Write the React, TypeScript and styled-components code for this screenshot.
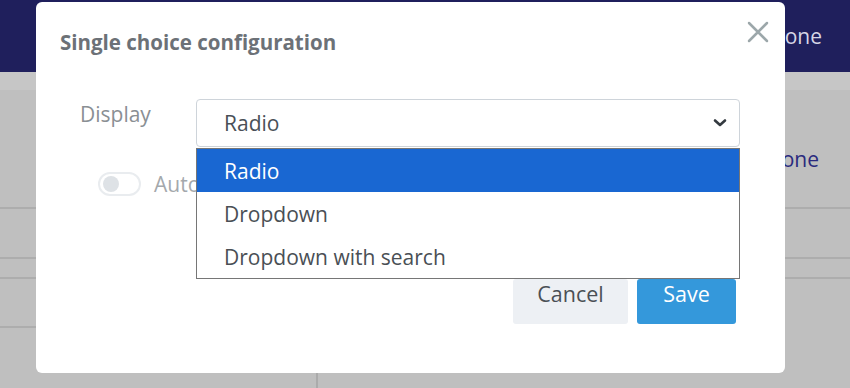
import React from 'react'
import styled, { createGlobalStyle } from 'styled-components'

const GlobalStyle = createGlobalStyle`
    html, body {
        margin: 0;
        padding: 0;
        width: 850px;
        height: 388px;
        overflow: hidden;
        background: #bfbfbf;
        font-family: "Open Sans", "Noto Sans", sans-serif;
    }
`

// page behind the dimmed backdrop
const Page = styled.div`
    width: 850px;
    height: 388px;
    display: flex;
    flex-direction: column;
    overflow: hidden;
    background: #bfbfbf;
`

const TopBar = styled.div`
    flex-shrink: 0;
    height: 72px;
    background: #1f1f5c;
    display: flex;
    align-items: center;
    justify-content: flex-end;
    padding-right: 28px;
    color: #d6d6e6;
    font-size: 21px;
`

const SubBand = styled.div`
    flex-shrink: 0;
    height: 18px;
    background: #c6c6c6;
`

const Table = styled.div`
    flex: 1;
    min-height: 0;
    display: grid;
    grid-template-columns: 318px 1fr;
`

const Column = styled.div<{ $divider?: boolean }>`
    display: flex;
    flex-direction: column;
    border-right: ${(p) => (p.$divider ? '2px solid #ababab' : 'none')};
`

const Cell = styled.div<{ $h: number; $line?: boolean }>`
    flex-shrink: 0;
    height: ${(p) => p.$h}px;
    box-sizing: border-box;
    border-bottom: ${(p) => (p.$line ? '2px solid #adadad' : 'none')};
    display: flex;
    align-items: center;
    justify-content: flex-end;
    padding: 0 31px 0 0;
    color: #2a2a7e;
    font-size: 21px;
`

const CellText = styled.span`
    margin-top: 20px;
`

// modal
const Modal = styled.div`
    position: fixed;
    left: 36px;
    top: 2px;
    width: 749px;
    height: 371px;
    background: #ffffff;
    border-radius: 6px;
    box-sizing: border-box;
    padding: 26px 49px 0 24px;
    display: flex;
    flex-direction: column;
`

const Title = styled.h2`
    margin: 0;
    font-size: 20.5px;
    line-height: 28px;
    font-weight: 700;
    color: #6c7177;
`

const CloseButton = styled.button`
    position: absolute;
    top: 16px;
    right: 13px;
    width: 28px;
    height: 28px;
    border: none;
    background: none;
    padding: 0;
    cursor: pointer;
`

const FieldRow = styled.div`
    display: flex;
    margin-top: 43px;
    padding-left: 20px;
    margin-right: -4px;
`

const Label = styled.label`
    width: 116px;
    font-size: 21px;
    line-height: 30px;
    color: #8a8f94;
`

const SelectWrap = styled.div`
    position: relative;
    flex: 1;
`

const SelectBox = styled.div`
    height: 48px;
    box-sizing: border-box;
    border: 1px solid #ced4da;
    border-radius: 4px;
    display: flex;
    align-items: center;
    justify-content: space-between;
    padding: 0 12px 0 27px;
    font-size: 21px;
    color: #495057;
`

const OptionList = styled.ul`
    position: absolute;
    left: 0;
    right: 0;
    top: 49px;
    margin: 0;
    padding: 0;
    list-style: none;
    background: #ffffff;
    border: 1px solid #767676;
    z-index: 2;
`

const Option = styled.li<{ $active?: boolean }>`
    height: 43px;
    display: flex;
    align-items: center;
    padding-left: 27px;
    font-size: 21px;
    background: ${(p) => (p.$active ? '#1967d2' : '#ffffff')};
    color: ${(p) => (p.$active ? '#ffffff' : '#4a4f55')};
`

const ToggleRow = styled.div`
    display: flex;
    align-items: center;
    gap: 13px;
    margin-top: 23px;
    padding-left: 38px;
    font-size: 21px;
    color: #a4a8ac;
    white-space: nowrap;
`

const Toggle = styled.span`
    flex-shrink: 0;
    width: 43px;
    height: 24px;
    box-sizing: border-box;
    border: 2px solid #e9ecef;
    border-radius: 12px;
    display: flex;
    align-items: center;
    padding-left: 3px;
`

const Knob = styled.span`
    width: 16px;
    height: 16px;
    border-radius: 50%;
    background: #dee2e6;
`

const Footer = styled.div`
    display: flex;
    justify-content: flex-end;
    gap: 9px;
    margin-top: 81px;
`

const Button = styled.button<{ $primary?: boolean }>`
    height: 45px;
    padding: 0 24px 19px;
    border: none;
    border-radius: 3px;
    font-family: inherit;
    font-size: 21.5px;
    background: ${(p) => (p.$primary ? '#3498db' : '#edf0f4')};
    color: ${(p) => (p.$primary ? '#ffffff' : '#4a4f55')};
    min-width: ${(p) => (p.$primary ? '99px' : '115px')};
`

export default function App() {
    return (
        <>
            <GlobalStyle />
            <Page>
                <TopBar>Done</TopBar>
                <SubBand />
                <Table>
                    <Column $divider>
                        <Cell $h={119} $line />
                        <Cell $h={50} $line />
                        <Cell $h={20} $line />
                        <Cell $h={49} $line />
                        <Cell $h={60} />
                    </Column>
                    <Column>
                        <Cell $h={119} $line>
                            <CellText>Done</CellText>
                        </Cell>
                        <Cell $h={50} $line />
                        <Cell $h={20} $line />
                        <Cell $h={100} />
                    </Column>
                </Table>
            </Page>

            <Modal>
                <Title>Single choice configuration</Title>
                <CloseButton aria-label="Close">
                    <svg width="28" height="28" viewBox="0 0 28 28">
                        <path d="M5 5 L23 23 M23 5 L5 23" stroke="#9ca7aa" strokeWidth="2.5" strokeLinecap="round" />
                    </svg>
                </CloseButton>

                <FieldRow>
                    <Label>Display</Label>
                    <SelectWrap>
                        <SelectBox>
                            <span>Radio</span>
                            <svg width="14" height="10" viewBox="0 0 14 10">
                                <path d="M2 2.5 L7 7 L12 2.5" fill="none" stroke="#343a40" strokeWidth="2.6" strokeLinecap="round" strokeLinejoin="round" />
                            </svg>
                        </SelectBox>
                        <OptionList>
                            <Option $active>Radio</Option>
                            <Option>Dropdown</Option>
                            <Option>Dropdown with search</Option>
                        </OptionList>
                    </SelectWrap>
                </FieldRow>

                <ToggleRow>
                    <Toggle>
                        <Knob />
                    </Toggle>
                    <span>Auto select first option</span>
                </ToggleRow>

                <Footer>
                    <Button>Cancel</Button>
                    <Button $primary>Save</Button>
                </Footer>
            </Modal>
        </>
    )
}
